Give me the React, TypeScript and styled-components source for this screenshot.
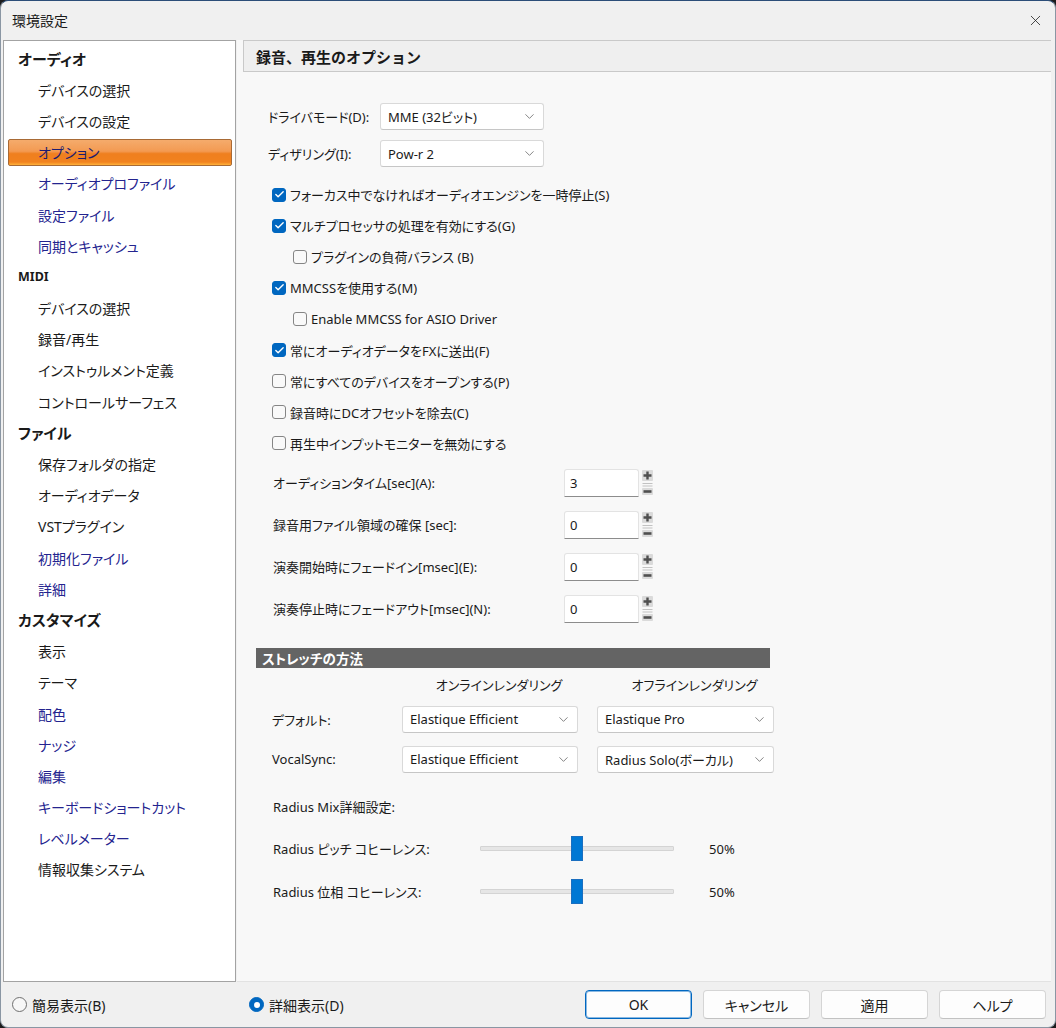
import React from 'react';
import styled, { createGlobalStyle } from 'styled-components';
import { ChevronDown, Check, X } from 'lucide-react';

const GlobalStyle = createGlobalStyle`
  html, body {
    margin: 0;
    padding: 0;
    background: #1c1c1c;
  }
  body {
    font-family: "Noto Sans", "Noto Sans CJK JP", sans-serif;
    font-feature-settings: "palt";
    color: #1a1a1a;
  }
  * {
    box-sizing: border-box;
  }
`;

type NavEntry = { text: string; kind: 'header' | 'item'; link?: boolean; selected?: boolean; latin?: boolean };

const nav: NavEntry[] = [
  { text: 'オーディオ', kind: 'header' },
  { text: 'デバイスの選択', kind: 'item' },
  { text: 'デバイスの設定', kind: 'item' },
  { text: 'オプション', kind: 'item', selected: true, link: true },
  { text: 'オーディオプロファイル', kind: 'item', link: true },
  { text: '設定ファイル', kind: 'item', link: true },
  { text: '同期とキャッシュ', kind: 'item', link: true },
  { text: 'MIDI', kind: 'header', latin: true },
  { text: 'デバイスの選択', kind: 'item' },
  { text: '録音/再生', kind: 'item' },
  { text: 'インストゥルメント定義', kind: 'item' },
  { text: 'コントロールサーフェス', kind: 'item' },
  { text: 'ファイル', kind: 'header' },
  { text: '保存フォルダの指定', kind: 'item' },
  { text: 'オーディオデータ', kind: 'item' },
  { text: 'VSTプラグイン', kind: 'item' },
  { text: '初期化ファイル', kind: 'item', link: true },
  { text: '詳細', kind: 'item', link: true },
  { text: 'カスタマイズ', kind: 'header' },
  { text: '表示', kind: 'item' },
  { text: 'テーマ', kind: 'item' },
  { text: '配色', kind: 'item', link: true },
  { text: 'ナッジ', kind: 'item', link: true },
  { text: '編集', kind: 'item', link: true },
  { text: 'キーボードショートカット', kind: 'item', link: true },
  { text: 'レベルメーター', kind: 'item', link: true },
  { text: '情報収集システム', kind: 'item' },
];

const checks = [
  { text: 'フォーカス中でなければオーディオエンジンを一時停止(S)', on: true },
  { text: 'マルチプロセッサの処理を有効にする(G)', on: true },
  { text: 'プラグインの負荷バランス (B)', on: false, indent: true },
  { text: 'MMCSSを使用する(M)', on: true },
  { text: 'Enable MMCSS for ASIO Driver', on: false, indent: true },
  { text: '常にオーディオデータをFXに送出(F)', on: true },
  { text: '常にすべてのデバイスをオープンする(P)', on: false },
  { text: '録音時にDCオフセットを除去(C)', on: false },
  { text: '再生中インプットモニターを無効にする', on: false },
];

const spins = [
  { text: 'オーディションタイム[sec](A):', value: '3' },
  { text: '録音用ファイル領域の確保 [sec]:', value: '0' },
  { text: '演奏開始時にフェードイン[msec](E):', value: '0' },
  { text: '演奏停止時にフェードアウト[msec](N):', value: '0' },
];

const Window = styled.div`
  width: 1056px;
  height: 1028px;
  display: flex;
  flex-direction: column;
  background: #f0f0f0;
  border: 1px solid #8a96a3;
  border-top-color: #2b4d78;
  border-radius: 8px;
  overflow: hidden;
`;

const TitleBar = styled.div`
  height: 38px;
  flex: none;
  display: flex;
  align-items: center;
  justify-content: space-between;
  padding: 0 11px 0 11px;
  font-size: 14px;
  color: #1a1a1a;
`;

const Body = styled.div`
  flex: 1;
  display: flex;
  gap: 1px;
  padding: 1px 4px 0 2px;
  min-height: 0;
`;

const Sidebar = styled.div`
  width: 233px;
  flex: none;
  background: #ffffff;
  border: 1px solid #a3a3a3;
  padding-top: 2px;
`;

const NavRow = styled.div`
  height: 31.2px;
  padding: 2px 3px 2px 4px;
`;

const NavPill = styled.div<{ $kind: 'header' | 'item'; $selected?: boolean; $link?: boolean; $latin?: boolean }>`
  height: 100%;
  display: flex;
  align-items: center;
  padding-left: ${(p) => (p.$kind === 'header' ? '9px' : '29px')};
  font-size: ${(p) => (p.$latin ? '12.5px' : p.$kind === 'header' ? '15px' : '14px')};
  font-weight: ${(p) => (p.$kind === 'header' ? 700 : 400)};
  color: ${(p) => (p.$selected ? '#1c1c70' : p.$link ? '#24248f' : '#1a1a1a')};
  border-radius: 2px;
  border: 1px solid ${(p) => (p.$selected ? '#a86a35' : 'transparent')};
  background: ${(p) =>
    p.$selected
      ? 'linear-gradient(#f5ab6c 0%, #f39a52 45%, #ef7f1f 55%, #f1821f 88%, #ffb23a 100%)'
      : 'transparent'};
`;

const Panel = styled.div`
  flex: 1;
  background: #f8f8f8;
  border-bottom: 1px solid #e2e2e2;
  padding-left: 6px;
  display: flex;
  flex-direction: column;
`;

const PanelHeader = styled.div`
  height: 32px;
  flex: none;
  display: flex;
  align-items: center;
  padding-left: 12px;
  background: #efefef;
  border: 1px solid #c9c9c9;
  border-right: none;
  font-size: 15px;
  font-weight: 700;
  font-feature-settings: normal;
`;

const Content = styled.div`
  padding-left: 13px;
  font-size: 13px;
  display: flex;
  flex-direction: column;
`;

const FieldRow = styled.div<{ $mt: number }>`
  display: flex;
  align-items: center;
  margin-top: ${(p) => p.$mt}px;
  padding-left: 12px;
`;

const FieldLabel = styled.div`
  width: 112px;
`;

const SelectBox = styled.div<{ $w: number }>`
  width: ${(p) => p.$w}px;
  height: 27px;
  display: flex;
  align-items: center;
  justify-content: space-between;
  padding: 0 6px 0 7px;
  background: #ffffff;
  border: 1px solid #d9d9d9;
  border-bottom-color: #c6c6c6;
  border-radius: 3px;
  font-size: 13px;
  color: #1a1a1a;
`;

const CheckList = styled.div`
  margin-top: 12px;
  display: flex;
  flex-direction: column;
`;

const CheckRow = styled.div<{ $indent?: boolean }>`
  height: 31.1px;
  display: flex;
  align-items: center;
  gap: 4px;
  padding-left: ${(p) => (p.$indent ? '37px' : '16px')};
`;

const Box = styled.span<{ $on: boolean }>`
  width: 14px;
  height: 14px;
  flex: none;
  display: inline-flex;
  align-items: center;
  justify-content: center;
  border-radius: 3px;
  background: ${(p) => (p.$on ? '#0067c0' : '#f9f9f9')};
  border: 1px solid ${(p) => (p.$on ? '#0067c0' : '#858585')};
  color: #ffffff;
`;

const SpinList = styled.div`
  margin-top: 3px;
  display: flex;
  flex-direction: column;
`;

const SpinRow = styled.div`
  height: 42px;
  display: flex;
  align-items: center;
  padding-left: 17px;
`;

const SpinLabel = styled.div`
  width: 291px;
`;

const SpinInput = styled.div`
  width: 75px;
  height: 28px;
  display: flex;
  align-items: center;
  padding-left: 5px;
  background: #ffffff;
  border: 1px solid #e3e3e3;
  border-bottom-color: #8c8c8c;
  border-radius: 3px 3px 0 0;
`;

const SpinButtons = styled.svg`
  margin-left: 2px;
  flex: none;
`;

const StretchBar = styled.div`
  width: 514px;
  height: 20px;
  margin-top: 18px;
  display: flex;
  align-items: center;
  padding-left: 6px;
  background: #646464;
  color: #ffffff;
  font-weight: 700;
  font-size: 13.5px;
`;

const StretchRow = styled.div<{ $h: number; $mt: number }>`
  height: ${(p) => p.$h}px;
  margin-top: ${(p) => p.$mt}px;
  display: grid;
  grid-template-columns: 111px 176px 177px;
  column-gap: 19px;
  align-items: center;
  padding-left: 16px;
`;

const ColumnHead = styled.div`
  padding-left: 18px;
  text-align: center;
`;

const SubHeading = styled.div`
  height: 24px;
  margin-top: 22px;
  display: flex;
  align-items: center;
  padding-left: 17px;
`;

const SliderRow = styled.div<{ $mt: number }>`
  height: 30px;
  margin-top: ${(p) => p.$mt}px;
  display: flex;
  align-items: center;
  padding-left: 17px;
`;

const SliderLabel = styled.div`
  width: 207px;
`;

const Track = styled.div`
  position: relative;
  width: 194px;
  height: 5px;
  background: #e6e6e6;
  border: 1px solid #d4d4d4;
  border-radius: 1px;
`;

const Thumb = styled.div`
  position: absolute;
  top: -11px;
  width: 12px;
  height: 25px;
  margin-left: -6px;
  background: #0078d4;
  border: 1px solid #1b6fc0;
`;

const Percent = styled.div`
  margin-left: 35px;
`;

const Footer = styled.div`
  height: 45px;
  flex: none;
  display: flex;
  align-items: center;
  padding: 0 9px 0 11px;
  font-size: 14px;
`;

const RadioItem = styled.div<{ $w?: number }>`
  display: flex;
  align-items: center;
  gap: 5px;
  width: ${(p) => (p.$w ? `${p.$w}px` : 'auto')};
`;

const RadioDot = styled.span<{ $on: boolean }>`
  width: 15px;
  height: 15px;
  border-radius: 50%;
  flex: none;
  background: ${(p) => (p.$on ? '#0067c0' : '#f7f7f7')};
  border: 1px solid ${(p) => (p.$on ? '#0067c0' : '#6f6f6f')};
  display: inline-flex;
  align-items: center;
  justify-content: center;

  &::after {
    content: '';
    width: 6px;
    height: 6px;
    border-radius: 50%;
    background: ${(p) => (p.$on ? '#ffffff' : 'transparent')};
  }
`;

const Buttons = styled.div`
  margin-left: auto;
  display: flex;
  gap: 11px;
`;

const Button = styled.div<{ $primary?: boolean }>`
  width: 107px;
  height: 29px;
  display: flex;
  align-items: center;
  justify-content: center;
  background: #fdfdfd;
  border-radius: 4px;
  border: 1px solid ${(p) => (p.$primary ? '#0067c0' : '#d5d5d5')};
  border-bottom-color: ${(p) => (p.$primary ? '#0067c0' : '#c2c2c2')};
  box-shadow: ${(p) => (p.$primary ? 'inset 0 0 0 1px rgba(0, 103, 192, 0.45)' : 'none')};
  color: #1a1a1a;
`;

const Select = ({ w, value }: { w: number; value: string }) => (
  <SelectBox $w={w}>
    <span>{value}</span>
    <ChevronDown size={15} strokeWidth={1.2} color="#5c5c5c" />
  </SelectBox>
);

const Spinner = () => (
  <SpinButtons width="13" height="27" viewBox="0 0 13 27">
    <rect x="1" y="1" width="11" height="11" rx="1" fill="#dadada" />
    <path d="M6.5 2.5v8M2.5 6.5h8" stroke="#4f4f4f" strokeWidth="2.4" />
    <path d="M1.5 14.5h10M1.5 17h10" stroke="#c2c2c2" strokeWidth="1" />
    <rect x="1" y="19" width="11" height="7" rx="1" fill="#dadada" />
    <path d="M2.5 22.5h8" stroke="#4f4f4f" strokeWidth="2.6" />
  </SpinButtons>
);

const Slider = ({ label, value }: { label: string; value: number }) => (
  <>
    <SliderLabel>{label}</SliderLabel>
    <Track>
      <Thumb style={{ left: `${value}%` }} />
    </Track>
    <Percent>{value}%</Percent>
  </>
);

export default function App() {
  return (
    <Window>
      <GlobalStyle />
      <TitleBar>
        <span>環境設定</span>
        <X size={17} strokeWidth={1.1} color="#1a1a1a" />
      </TitleBar>
      <Body>
        <Sidebar>
          {nav.map((n, i) => (
            <NavRow key={i}>
              <NavPill $kind={n.kind} $selected={n.selected} $link={n.link} $latin={n.latin}>
                {n.text}
              </NavPill>
            </NavRow>
          ))}
        </Sidebar>
        <Panel>
          <PanelHeader>録音、再生のオプション</PanelHeader>
          <Content>
            <FieldRow $mt={31}>
              <FieldLabel>ドライバモード(D):</FieldLabel>
              <Select w={164} value="MME (32ビット)" />
            </FieldRow>
            <FieldRow $mt={10}>
              <FieldLabel>ディザリング(I):</FieldLabel>
              <Select w={164} value="Pow-r 2" />
            </FieldRow>

            <CheckList>
              {checks.map((c, i) => (
                <CheckRow key={i} $indent={c.indent}>
                  <Box $on={c.on}>{c.on && <Check size={11} strokeWidth={3} />}</Box>
                  <span>{c.text}</span>
                </CheckRow>
              ))}
            </CheckList>

            <SpinList>
              {spins.map((s, i) => (
                <SpinRow key={i}>
                  <SpinLabel>{s.text}</SpinLabel>
                  <SpinInput>{s.value}</SpinInput>
                  <Spinner />
                </SpinRow>
              ))}
            </SpinList>

            <StretchBar>ストレッチの方法</StretchBar>
            <StretchRow $h={34} $mt={0}>
              <span />
              <ColumnHead>オンラインレンダリング</ColumnHead>
              <ColumnHead>オフラインレンダリング</ColumnHead>
            </StretchRow>
            <StretchRow $h={27} $mt={4}>
              <span>デフォルト:</span>
              <Select w={176} value="Elastique Efficient" />
              <Select w={177} value="Elastique Pro" />
            </StretchRow>
            <StretchRow $h={27} $mt={13}>
              <span>VocalSync:</span>
              <Select w={176} value="Elastique Efficient" />
              <Select w={177} value="Radius Solo(ボーカル)" />
            </StretchRow>

            <SubHeading>Radius Mix詳細設定:</SubHeading>
            <SliderRow $mt={15}>
              <Slider label="Radius ピッチ コヒーレンス:" value={50} />
            </SliderRow>
            <SliderRow $mt={13}>
              <Slider label="Radius 位相 コヒーレンス:" value={50} />
            </SliderRow>
          </Content>
        </Panel>
      </Body>
      <Footer>
        <RadioItem $w={237}>
          <RadioDot $on={false} />
          <span>簡易表示(B)</span>
        </RadioItem>
        <RadioItem>
          <RadioDot $on={true} />
          <span>詳細表示(D)</span>
        </RadioItem>
        <Buttons>
          <Button $primary>OK</Button>
          <Button>キャンセル</Button>
          <Button>適用</Button>
          <Button>ヘルプ</Button>
        </Buttons>
      </Footer>
    </Window>
  );
}
